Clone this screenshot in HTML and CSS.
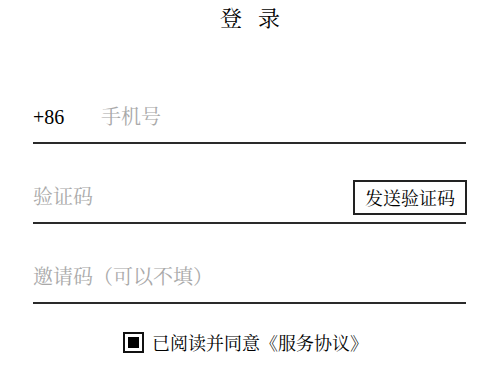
FILE: index.html
```html
<!DOCTYPE html>
<html lang="zh-CN">
<head>
<meta charset="utf-8">
<title>登录</title>
<link rel="stylesheet" href="styles.css">
</head>
<body>
<div class="page">
  <h1 class="title">登<span class="title-gap"></span>录</h1>
  <form class="form">
    <div class="field">
      <span class="prefix">+86</span>
      <input class="input" type="tel" placeholder="手机号">
    </div>
    <div class="field">
      <input class="input" type="text" placeholder="验证码">
      <button class="code-btn" type="button">发送验证码</button>
    </div>
    <div class="field">
      <input class="input" type="text" placeholder="邀请码（可以不填）">
    </div>
    <label class="agree">
      <span class="check"><span class="check-mark"></span></span>
      <span class="agree-text">已阅读并同意《服务协议》</span>
    </label>
  </form>
</div>
</body>
</html>
```
FILE: styles.css
```css
html, body {
  margin: 0;
  padding: 0;
  background: #fff;
}
body {
  font-family: "Liberation Serif", "Noto Serif CJK SC", "Noto Sans CJK SC", serif;
  color: #111;
}
.page {
  width: 500px;
  height: 365px;
  overflow: hidden;
}
.title {
  margin: 0;
  padding-top: 6px;
  font-size: 22px;
  line-height: 26px;
  font-weight: normal;
  text-align: center;
  color: #000;
}
.title-gap {
  display: inline-block;
  width: 16px;
}
.form {
  display: flex;
  flex-direction: column;
  gap: 28px;
  padding: 60px 34px 0 33px;
}
.field {
  display: flex;
  align-items: center;
  height: 50px;
  border-bottom: 2px solid #2a2a2a;
}
.prefix {
  width: 68px;
  flex: none;
  font-size: 20px;
  color: #000;
}
.input {
  flex: 1;
  min-width: 0;
  border: none;
  outline: none;
  padding: 0;
  margin: 0;
  background: transparent;
  font-family: inherit;
  font-size: 20px;
  line-height: 28px;
  color: #111;
}
.input::placeholder {
  color: #a9a9a9;
}
.code-btn {
  flex: none;
  width: 114px;
  height: 35px;
  margin-right: -1px;
  box-sizing: border-box;
  border: 2px solid #222;
  background: #fff;
  padding: 0;
  font-family: inherit;
  font-size: 18px;
  color: #000;
}
.agree {
  display: flex;
  align-items: center;
  justify-content: center;
  gap: 8px;
  margin-top: -3px;
  padding-right: 8px;
}
.check {
  width: 11px;
  height: 11px;
  padding: 3px;
  box-sizing: content-box;
  border: 2px solid #111;
  display: flex;
}
.check-mark {
  flex: 1;
  background: #000;
}
.agree-text {
  font-size: 18px;
  color: #000;
}
```
